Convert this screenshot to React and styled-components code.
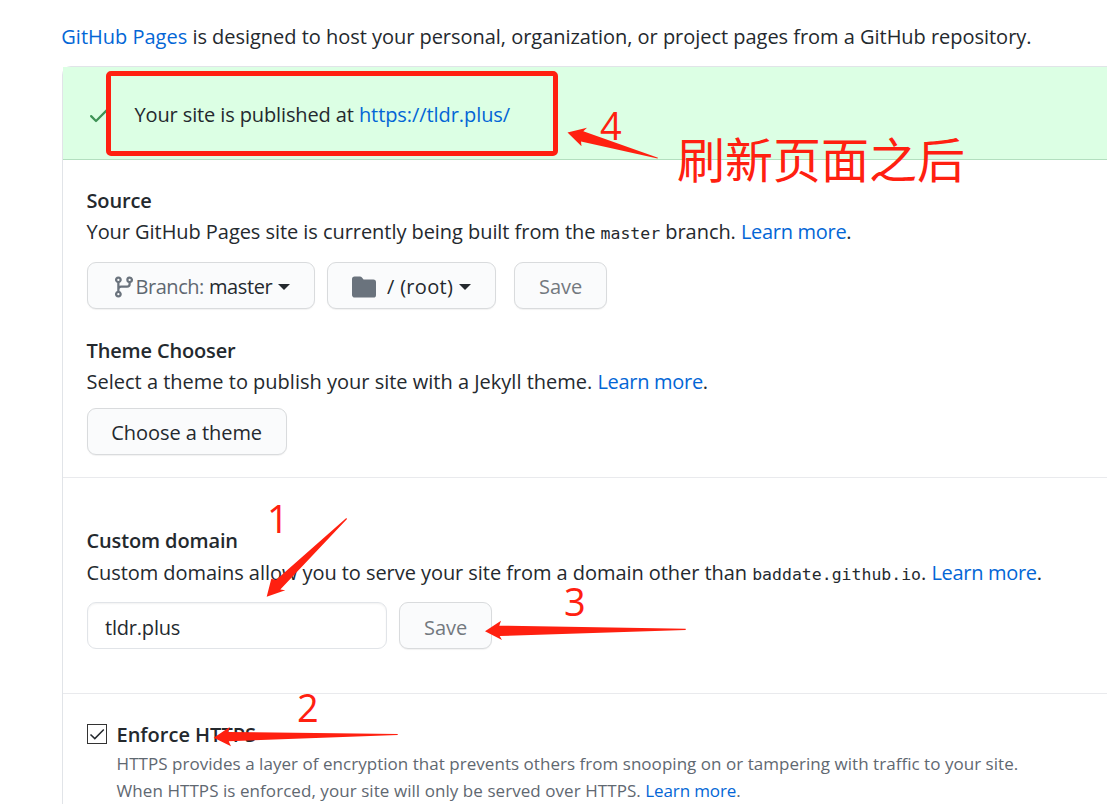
import React from 'react';
import styled, { createGlobalStyle } from 'styled-components';

const GlobalStyle = createGlobalStyle`
  *, *::before, *::after { box-sizing: border-box; }
  html, body { margin: 0; background: #fff; overflow: hidden; }
  body { font-family: "Open Sans", "Noto Sans", sans-serif; color: #24292e; }
`;

const Page = styled.main`
  position: relative;
  width: 1107px;
  height: 804px;
  overflow: hidden;
  padding: 21px 0 0 62px;
  font-size: 20px;
  line-height: 31px;
  white-space: nowrap;
`;

const Line = styled.p`
  margin: 0 0 0 -0.5px;
  height: 31px;
  letter-spacing: ${(p) => p.$track || 0}px;
`;

const Intro = styled(Line)`
  margin: 0 0 14px -0.7px;
`;

const Link = styled.a`
  color: #0366d6;
  text-decoration: none;
  letter-spacing: ${(p) => (p.$track === undefined ? -0.3 : p.$track)}px;
`;

const Text = styled.span`
  letter-spacing: ${(p) => p.$track || 0}px;
`;

const Code = styled.code`
  font-family: "DejaVu Sans Mono", monospace;
  font-size: 16.5px;
  line-height: 1;
  letter-spacing: 0;
`;

const Panel = styled.div`
  width: 1080px;
  height: 760px;
  border: 1px solid #e1e4e8;
  border-radius: 9px;
`;

const Flash = styled.div`
  display: flex;
  align-items: center;
  height: 93px;
  padding: 3px 24px 0;
  background: #dcffe4;
  border-bottom: 1px solid #b3dfbf;
`;

const FlashIcon = styled.svg`
  width: 24px;
  height: 24px;
  margin-right: 23.5px;
  fill: #3f9356;
`;

const Section = styled.section`
  height: ${(p) => p.$height}px;
  padding: ${(p) => p.$top}px 24px 0;
  border-bottom: 1px solid #e9eaed;
`;

const Heading = styled.h5`
  margin: 0 0 ${(p) => p.$gap || 0}px -0.5px;
  height: 31px;
  font-size: 20px;
  line-height: 31px;
  font-weight: 600;
  letter-spacing: ${(p) => p.$track || 0}px;
`;

const Controls = styled.div`
  display: flex;
  align-items: flex-start;
  margin: ${(p) => p.$top}px 0 ${(p) => p.$bottom || 0}px;
`;

const Button = styled.button`
  display: flex;
  align-items: center;
  width: ${(p) => p.$width}px;
  height: 47px;
  margin-right: ${(p) => p.$after || 12}px;
  padding: ${(p) => p.$drop || 1}px 0 0 ${(p) => p.$inset || 24}px;
  border: 1px solid #d9dbdd;
  border-radius: 9px;
  background: #fafbfc;
  box-shadow: 0 1px 1px rgba(27, 31, 35, 0.06);
  color: ${(p) => (p.$muted ? '#73797f' : '#24292e')};
  font: inherit;
  text-align: left;
  letter-spacing: ${(p) => p.$track || 0}px;
`;

const ButtonIcon = styled.svg`
  flex: none;
  width: 24px;
  height: 24px;
  margin: 2px ${(p) => p.$after || 0}px 0 0;
  fill: #6a737d;
`;

const Prefix = styled.span`
  margin: 0 5px 0 -0.5px;
  color: #5f6871;
  letter-spacing: -0.45px;
`;

const Caret = styled.span`
  margin: 2px 0 0 ${(p) => p.$before}px;
  border: 6px solid transparent;
  border-top-color: #24292e;
  border-bottom: 0;
`;

const Field = styled.input`
  width: 300px;
  height: 47px;
  margin: 0 12px 0 0;
  padding: 3px 17px 0;
  border: 1px solid #e1e4e8;
  border-radius: 9px;
  background: #fff;
  box-shadow: inset 0 1px 2px rgba(27, 31, 35, 0.06);
  color: #24292e;
  font: inherit;
  letter-spacing: -0.2px;
  outline: none;
`;

const CheckRow = styled.div`
  display: flex;
  gap: 10px;
`;

const CheckBox = styled.span`
  display: flex;
  flex: none;
  width: 20px;
  height: 20px;
  margin-top: 5px;
  border: 1px solid #333;
  background: #fff;

  svg {
    width: 18px;
    height: 18px;
    fill: none;
    stroke: #24292e;
    stroke-width: 1.5;
  }
`;

const Note = styled.p`
  margin: 0 0 0 -0.4px;
  height: 27px;
  color: #5f6871;
  font-size: 17px;
  line-height: 27px;
  letter-spacing: ${(p) => p.$track}px;
`;

const MarkFrame = styled.div`
  position: absolute;
  left: 106px;
  top: 71px;
  width: 452px;
  height: 85px;
  border: 5px solid #ff2010;
  border-radius: 5px;
`;

const MarkArrows = styled.svg`
  position: absolute;
  inset: 0;
  width: 1107px;
  height: 804px;
  fill: #ff2010;
  pointer-events: none;
`;

const MarkText = styled.span`
  position: absolute;
  left: ${(p) => p.$x}px;
  top: ${(p) => p.$y}px;
  color: #ff2010;
  font-size: 38px;
  line-height: 38px;
`;

const MarkCaption = styled(MarkText)`
  font-family: "Noto Sans CJK SC", sans-serif;
  font-size: 48px;
  line-height: 48px;
`;

const ARROWS = [
  '266.7,596.7 271.3,578.7 276,580 346.3,518 347,519 280.3,589.5 285.3,590.3',
  '213.7,737.7 229.7,727 228.3,732 397.7,734 397.7,735 228.7,741.3 231,746.3',
  '485,631.3 501,620.7 499.3,625.7 685.7,628.7 685.7,630 499.7,636 502,640',
  '567.5,132.5 587,127.7 583.3,131.3 658,157.7 657.5,158.5 581,141.5 581.5,146.3',
];

const NUMBERS = [
  { label: '1', x: 267, y: 499 },
  { label: '2', x: 297, y: 688 },
  { label: '3', x: 564, y: 582 },
  { label: '4', x: 600, y: 106 },
];

function BranchIcon() {
  return (
    <ButtonIcon viewBox="0 0 16 16">
      <path fillRule="evenodd" d="M11.75 2.5a.75.75 0 100 1.5.75.75 0 000-1.5zm-2.25.75a2.25 2.25 0 113 2.122V6A2.5 2.5 0 0110 8.5H6a1 1 0 00-1 1v1.128a2.251 2.251 0 11-1.5 0V5.372a2.25 2.25 0 111.5 0v1.836A2.492 2.492 0 016 7h4a1 1 0 001-1v-.628A2.25 2.25 0 019.5 3.25zM4.25 12a.75.75 0 100 1.5.75.75 0 000-1.5zM3.5 3.25a.75.75 0 111.5 0 .75.75 0 01-1.5 0z" />
    </ButtonIcon>
  );
}

function FolderIcon() {
  return (
    <ButtonIcon viewBox="0 0 16 16" $after={11}>
      <path d="M1.75 1A1.75 1.75 0 000 2.75v10.5C0 14.216.784 15 1.75 15h12.5A1.75 1.75 0 0016 13.25v-8.5A1.75 1.75 0 0014.25 3h-6.5a.25.25 0 01-.2-.1l-.9-1.2c-.33-.44-.85-.7-1.4-.7h-3.5z" />
    </ButtonIcon>
  );
}

function Annotations() {
  return (
    <>
      <MarkFrame />
      <MarkArrows viewBox="0 0 1107 804">
        {ARROWS.map((points) => (
          <polygon key={points} points={points} />
        ))}
      </MarkArrows>
      {NUMBERS.map((n) => (
        <MarkText key={n.label} $x={n.x} $y={n.y}>{n.label}</MarkText>
      ))}
      <MarkCaption lang="zh-CN" $x={677} $y={133}>刷新页面之后</MarkCaption>
    </>
  );
}

export default function App() {
  return (
    <Page>
      <GlobalStyle />
      <Intro $track={-0.03}>
        <Link $track={0}>GitHub Pages</Link> is designed to host your personal, organization, or project pages from a GitHub repository.
      </Intro>
      <Panel>
        <Flash>
          <FlashIcon viewBox="0 0 16 16">
            <path d="M13.78 4.22a.75.75 0 010 1.06l-7.25 7.25a.75.75 0 01-1.06 0L2.22 9.28a.75.75 0 011.06-1.06L6 10.94l6.72-6.72a.75.75 0 011.06 0z" />
          </FlashIcon>
          <Text $track={-0.12}>
            Your site is published at <Link $track={-0.07}>https://tldr.plus/</Link>
          </Text>
        </Flash>

        <Section $height={318} $top={25}>
          <Heading $track={-0.15}>Source</Heading>
          <Line $track={-0.055}>
            Your GitHub Pages site is currently being built from the <Code>master</Code> branch. <Link>Learn more</Link>.
          </Line>
          <Controls $top={15} $bottom={26}>
            <Button $width={228}>
              <BranchIcon />
              <Prefix>Branch:</Prefix>
              <Text $track={-0.4}>master</Text>
              <Caret $before={5.5} />
            </Button>
            <Button $width={169} $after={18}>
              <FolderIcon />
              <Text $track={0.3}>/ (root)</Text>
              <Caret $before={6} />
            </Button>
            <Button $width={93} $muted>Save</Button>
          </Controls>
          <Heading $track={-0.15}>Theme Chooser</Heading>
          <Line>
            Select a theme to publish your site with a Jekyll theme. <Link>Learn more</Link>.
          </Line>
          <Controls $top={11}>
            <Button $width={200} $inset={23.3} $track={-0.06}>Choose a theme</Button>
          </Controls>
        </Section>

        <Section $height={216} $top={47}>
          <Heading $gap={1} $track={-0.13}>Custom domain</Heading>
          <Line $track={-0.056}>
            Custom domains allow you to serve your site from a domain other than <Code>baddate.github.io</Code>. <Link>Learn more</Link>.
          </Line>
          <Controls $top={14}>
            <Field defaultValue="tldr.plus" />
            <Button $width={93} $drop={3} $muted>Save</Button>
          </Controls>
        </Section>

        <Section $height={150} $top={25}>
          <CheckRow>
            <CheckBox>
              <svg viewBox="0 0 18 18">
                <path d="M2.5 9.5 L6.8 13.6 L15.8 4.4" />
              </svg>
            </CheckBox>
            <div>
              <Heading>Enforce HTTPS</Heading>
              <Note $track={0.035}>
                HTTPS provides a layer of encryption that prevents others from snooping on or tampering with traffic to your site.
              </Note>
              <Note $track={0.06}>
                When HTTPS is enforced, your site will only be served over HTTPS. <Link $track={-0.12}>Learn more</Link>.
              </Note>
            </div>
          </CheckRow>
        </Section>
      </Panel>
      <Annotations />
    </Page>
  );
}
